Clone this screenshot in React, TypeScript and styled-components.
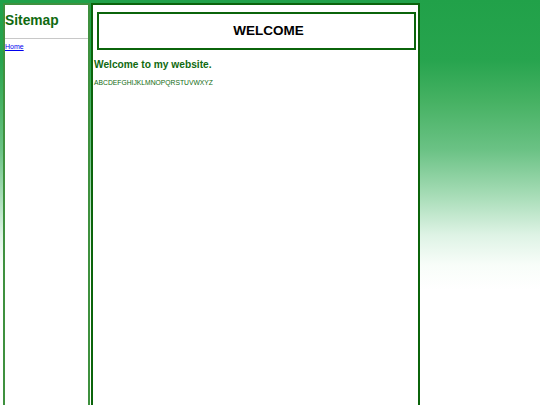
import React from 'react';
import styled, { createGlobalStyle } from 'styled-components';

const GlobalStyle = createGlobalStyle`
  html, body {
    margin: 0;
    padding: 0;
  }
  body {
    font-family: 'Liberation Sans', Arial, sans-serif;
    background-color: #fff;
    background-image: linear-gradient(
      to bottom,
      #21a149 0px,
      #27a44e 60px,
      #45b162 100px,
      #6bc285 150px,
      #a6dcb6 195px,
      #def3e5 235px,
      #f8fdf9 265px,
      #ffffff 290px
    );
    background-repeat: repeat-x;
    background-size: 100% 300px;
    min-height: 405px;
  }
`;

const Page = styled.div`
  display: flex;
  align-items: stretch;
  gap: 1px;
  padding: 3px 0 0 3px;
  height: 420px;
  box-sizing: border-box;
`;

const Sidebar = styled.aside`
  width: 87px;
  box-sizing: border-box;
  background: #fff;
  border: 2px solid #3f913f;
  border-bottom: none;
`;

const SideTitle = styled.h2`
  margin: 0;
  padding: 8px 0 10px;
  font-size: 13.8px;
  font-weight: bold;
  color: #106a10;
  border-bottom: 1px solid #c8c8c8;
`;

const SideLink = styled.a`
  display: block;
  margin-top: 4px;
  font-size: 7px;
  color: #0000ee;
  text-decoration: underline;
`;

const Main = styled.main`
  width: 329px;
  box-sizing: border-box;
  background: #fff;
  border: 2px solid #0b640b;
  border-bottom: none;
  padding: 7px 2px 0 1px;
`;

const Banner = styled.div`
  margin-left: 3px;
  height: 38px;
  box-sizing: border-box;
  border: 2px solid #0b640b;
  padding: 0 0 1px 24px;
  display: flex;
  align-items: center;
  justify-content: center;
  font-size: 13.5px;
  font-weight: bold;
  color: #000;
`;

const Heading = styled.h3`
  margin: 9px 0 0;
  font-size: 10.2px;
  font-weight: bold;
  color: #106a10;
`;

const Letters = styled.p`
  margin: 9px 0 0;
  font-size: 6.75px;
  color: #106a10;
`;

export default function App() {
  return (
    <>
      <GlobalStyle />
      <Page>
        <Sidebar>
          <SideTitle>Sitemap</SideTitle>
          <SideLink href="#">Home</SideLink>
        </Sidebar>
        <Main>
          <Banner>WELCOME</Banner>
          <Heading>Welcome to my website.</Heading>
          <Letters>ABCDEFGHIJKLMNOPQRSTUVWXYZ</Letters>
        </Main>
      </Page>
    </>
  );
}
